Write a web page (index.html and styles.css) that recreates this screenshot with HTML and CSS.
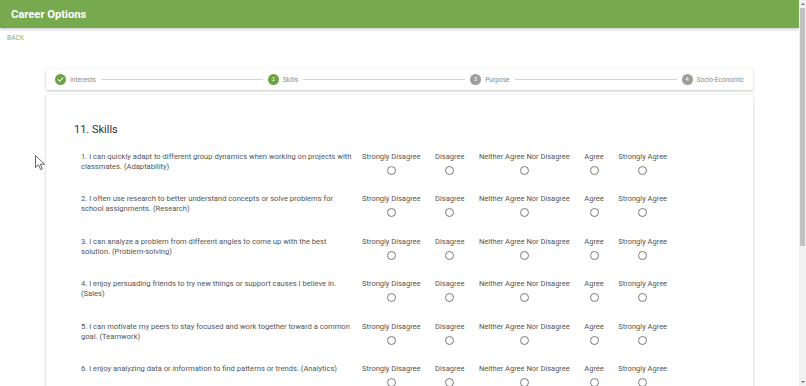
FILE: index.html
```html
<!DOCTYPE html>
<html lang="en">
<head>
<meta charset="utf-8">
<title>Career Options</title>
<link rel="stylesheet" href="styles.css">
</head>
<body>
<div class="viewport">
<header class="topbar"><h1 class="topbar-title">Career Options</h1></header>
<div class="back">BACK</div>

<div class="page">
  <div class="stepper">
    <div class="step">
      <span class="dot dot-done"><svg viewBox="0 0 12 12" width="7" height="7"><path d="M2 6.2 L4.8 9 L10 3.2" fill="none" stroke="#fff" stroke-width="1.8" stroke-linecap="round" stroke-linejoin="round"/></svg></span>
      <span class="step-label">Interests</span>
    </div>
    <div class="line"></div>
    <div class="step">
      <span class="dot dot-active">2</span>
      <span class="step-label">Skills</span>
    </div>
    <div class="line"></div>
    <div class="step">
      <span class="dot">3</span>
      <span class="step-label">Purpose</span>
    </div>
    <div class="line"></div>
    <div class="step">
      <span class="dot">4</span>
      <span class="step-label">Socio-Economic</span>
    </div>
  </div>

  <main class="card">
    <h2 class="section-title">11. Skills</h2>

    <div class="question">
      <p class="q-text">1. I can quickly adapt to different group dynamics when working on projects with classmates. (Adaptability)</p>
      <div class="options">
        <label class="opt"><span>Strongly Disagree</span><i class="radio"></i></label>
        <label class="opt"><span>Disagree</span><i class="radio"></i></label>
        <label class="opt"><span>Neither Agree Nor Disagree</span><i class="radio"></i></label>
        <label class="opt"><span>Agree</span><i class="radio"></i></label>
        <label class="opt"><span>Strongly Agree</span><i class="radio"></i></label>
      </div>
    </div>

    <div class="question">
      <p class="q-text">2. I often use research to better understand concepts or solve problems for school assignments. (Research)</p>
      <div class="options">
        <label class="opt"><span>Strongly Disagree</span><i class="radio"></i></label>
        <label class="opt"><span>Disagree</span><i class="radio"></i></label>
        <label class="opt"><span>Neither Agree Nor Disagree</span><i class="radio"></i></label>
        <label class="opt"><span>Agree</span><i class="radio"></i></label>
        <label class="opt"><span>Strongly Agree</span><i class="radio"></i></label>
      </div>
    </div>

    <div class="question">
      <p class="q-text">3. I can analyze a problem from different angles to come up with the best solution. (Problem-solving)</p>
      <div class="options">
        <label class="opt"><span>Strongly Disagree</span><i class="radio"></i></label>
        <label class="opt"><span>Disagree</span><i class="radio"></i></label>
        <label class="opt"><span>Neither Agree Nor Disagree</span><i class="radio"></i></label>
        <label class="opt"><span>Agree</span><i class="radio"></i></label>
        <label class="opt"><span>Strongly Agree</span><i class="radio"></i></label>
      </div>
    </div>

    <div class="question">
      <p class="q-text">4. I enjoy persuading friends to try new things or support causes I believe in. (Sales)</p>
      <div class="options">
        <label class="opt"><span>Strongly Disagree</span><i class="radio"></i></label>
        <label class="opt"><span>Disagree</span><i class="radio"></i></label>
        <label class="opt"><span>Neither Agree Nor Disagree</span><i class="radio"></i></label>
        <label class="opt"><span>Agree</span><i class="radio"></i></label>
        <label class="opt"><span>Strongly Agree</span><i class="radio"></i></label>
      </div>
    </div>

    <div class="question">
      <p class="q-text">5. I can motivate my peers to stay focused and work together toward a common goal. (Teamwork)</p>
      <div class="options">
        <label class="opt"><span>Strongly Disagree</span><i class="radio"></i></label>
        <label class="opt"><span>Disagree</span><i class="radio"></i></label>
        <label class="opt"><span>Neither Agree Nor Disagree</span><i class="radio"></i></label>
        <label class="opt"><span>Agree</span><i class="radio"></i></label>
        <label class="opt"><span>Strongly Agree</span><i class="radio"></i></label>
      </div>
    </div>

    <div class="question">
      <p class="q-text">6. I enjoy analyzing data or information to find patterns or trends. (Analytics)</p>
      <div class="options">
        <label class="opt"><span>Strongly Disagree</span><i class="radio"></i></label>
        <label class="opt"><span>Disagree</span><i class="radio"></i></label>
        <label class="opt"><span>Neither Agree Nor Disagree</span><i class="radio"></i></label>
        <label class="opt"><span>Agree</span><i class="radio"></i></label>
        <label class="opt"><span>Strongly Agree</span><i class="radio"></i></label>
      </div>
    </div>
  </main>
</div>
</div>

<div class="scrollbar">
  <span class="sb-arrow sb-up"></span>
  <div class="sb-track"><div class="sb-thumb"></div></div>
  <span class="sb-arrow sb-down"></span>
</div>

<svg class="cursor" width="11" height="16" viewBox="0 0 11 16"><path d="M0.5 0.5 L0.5 12.5 L3.5 9.8 L5.6 14.6 L7.4 13.8 L5.4 9.2 L9.5 9.2 Z" fill="#fff" stroke="#555" stroke-width="0.9" stroke-linejoin="round"/></svg>
</body>
</html>
```

FILE: styles.css
```css
html, body {
  height: 100%;
  overflow: hidden;
}

body {
  margin: 0;
  font-family: Roboto, "Liberation Sans", Arial, sans-serif;
  background: #fff;
  color: #555;
  display: flex;
}

.viewport {
  flex: 1;
  min-width: 0;
  height: 100%;
  overflow: hidden;
}

.scrollbar {
  width: 7px;
  height: 100%;
  background: #f1f1f1;
  display: flex;
  flex-direction: column;
  align-items: center;
}
.sb-arrow {
  width: 0;
  height: 0;
  margin: 3px 0;
  border-left: 2px solid transparent;
  border-right: 2px solid transparent;
}
.sb-up {
  border-bottom: 2px solid #777;
}
.sb-down {
  border-top: 2px solid #777;
}
.sb-track {
  flex: 1;
  width: 100%;
  display: flex;
  justify-content: center;
}
.sb-thumb {
  width: 5px;
  height: 238px;
  background: #c1c1c1;
}

.topbar {
  height: 28px;
  background: #77a94f;
  box-shadow: 0 1px 3px rgba(0, 0, 0, 0.25);
  display: flex;
  align-items: center;
  padding-left: 11px;
}
.topbar-title {
  margin: 0;
  color: #fff;
  font-size: 11.2px;
  font-weight: 700;
}

.back {
  margin: 6px 0 0 7px;
  font-size: 6.4px;
  color: #86a86a;
  letter-spacing: 0.2px;
  line-height: 8px;
}

.page {
  padding: 27px 46px 30px 46px;
}

.stepper {
  height: 21px;
  background: #fff;
  border-radius: 2px;
  box-shadow: 0 1px 3px rgba(0, 0, 0, 0.22), 0 0 1px rgba(0, 0, 0, 0.08);
  display: flex;
  align-items: center;
  padding: 0 9px 0 9px;
}
.step {
  display: flex;
  align-items: center;
  gap: 4px;
}
.dot {
  width: 11px;
  height: 11px;
  border-radius: 50%;
  background: #9e9e9e;
  color: #fff;
  font-size: 5.5px;
  display: flex;
  align-items: center;
  justify-content: center;
  line-height: 1;
}
.dot-done, .dot-active {
  background: #6ba443;
}
.step-label {
  font-size: 6.6px;
  color: #8a8a8a;
}
.line {
  flex: 1;
  height: 1px;
  background: #d6d6d6;
  margin: 0 5px;
}

.card {
  margin-top: 5px;
  background: #fff;
  box-shadow: 0 1px 3px rgba(0, 0, 0, 0.2), 0 0 1px rgba(0, 0, 0, 0.08);
  padding: 29px 28px 20px 28px;
}

.section-title {
  margin: 0 0 16px 0;
  font-size: 11px;
  font-weight: 400;
  color: #333;
  line-height: 12px;
}

.question {
  display: flex;
  align-items: flex-start;
  height: 42.4px;
  padding-left: 7px;
}
.q-text {
  margin: 0;
  width: 272px;
  margin-right: 9px;
  font-size: 7.6px;
  line-height: 10px;
  color: #555;
}
.options {
  display: flex;
  gap: 14.5px;
}
.opt {
  display: flex;
  flex-direction: column;
  align-items: center;
  font-size: 7.5px;
  line-height: 10px;
  color: #555;
  white-space: nowrap;
}
.radio {
  display: block;
  width: 7px;
  height: 7px;
  border: 1px solid #7a7a7a;
  border-radius: 50%;
  margin-top: 4px;
}

.cursor {
  position: absolute;
  left: 35px;
  top: 155px;
}
```
